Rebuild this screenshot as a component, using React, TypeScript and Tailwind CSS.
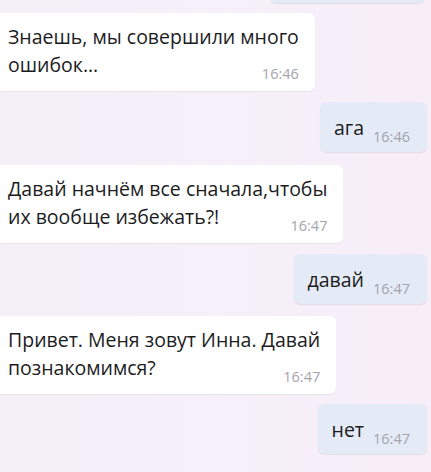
type Msg = {
  id: number;
  mine: boolean;
  lines: string[];
  time: string;
  mt: string;
};

const messages: Msg[] = [
  { id: 1, mine: false, lines: ["Знаешь, мы совершили много", "ошибок..."], time: "16:46", mt: "mt-[10px]" },
  { id: 2, mine: true, lines: ["ага"], time: "16:46", mt: "mt-[11px]" },
  { id: 3, mine: false, lines: ["Давай начнём все сначала,чтобы", "их вообще избежать?!"], time: "16:47", mt: "mt-[13px]" },
  { id: 4, mine: true, lines: ["давай"], time: "16:47", mt: "mt-[11px]" },
  { id: 5, mine: false, lines: ["Привет. Меня зовут Инна. Давай", "познакомимся?"], time: "16:47", mt: "mt-[12px]" },
  { id: 6, mine: true, lines: ["нет"], time: "16:47", mt: "mt-[10px]" },
];

function Time({ t }: { t: string }) {
  return (
    <span className="text-[14.5px] leading-[14px] text-[#a4a4ab] mb-[-2px] shrink-0">{t}</span>
  );
}

function IncomingBubble({ m }: { m: Msg }) {
  const last = m.lines[m.lines.length - 1];
  return (
    <div
      className={`${m.mt} self-start bg-white rounded-r-md pl-2 pr-4 pt-[10px] pb-[12px] shadow-[0_1px_1px_rgba(0,0,0,0.06)]`}
    >
      {m.lines.slice(0, -1).map((l, i) => (
        <div key={i} className="leading-[28px] whitespace-nowrap">{l}</div>
      ))}
      <div className="flex items-end justify-between gap-3">
        <span className="leading-[28px] whitespace-nowrap">{last}</span>
        <Time t={m.time} />
      </div>
    </div>
  );
}

function OutgoingBubble({ m }: { m: Msg }) {
  return (
    <div
      className={`${m.mt} self-end mr-1 bg-[#e4ebf6] rounded-md pl-[14px] pr-[17px] pt-[12px] pb-[10px] flex items-end gap-[9px] shadow-[0_1px_1px_rgba(0,0,0,0.08)]`}
    >
      <span className="leading-[28px]">{m.lines[0]}</span>
      <Time t={m.time} />
    </div>
  );
}

export default function App() {
  return (
    <div
      className="h-[472px] w-[431px] overflow-hidden bg-gradient-to-r from-[#f3f0f8] via-[#f5f0f9] to-[#f8eef8] text-[19.5px] text-[#1c1c1e] flex flex-col"
      style={{ fontFamily: '"Open Sans", "Noto Sans", sans-serif' }}
    >
      {/* previous message, mostly scrolled away */}
      <div className="self-end mr-[6px] -mt-[47px] h-[50px] w-[155px] bg-[#e4ebf6] rounded-md shadow-[0_1px_1px_rgba(0,0,0,0.08)]" />

      {messages.map((m) =>
        m.mine ? <OutgoingBubble key={m.id} m={m} /> : <IncomingBubble key={m.id} m={m} />
      )}
    </div>
  );
}
